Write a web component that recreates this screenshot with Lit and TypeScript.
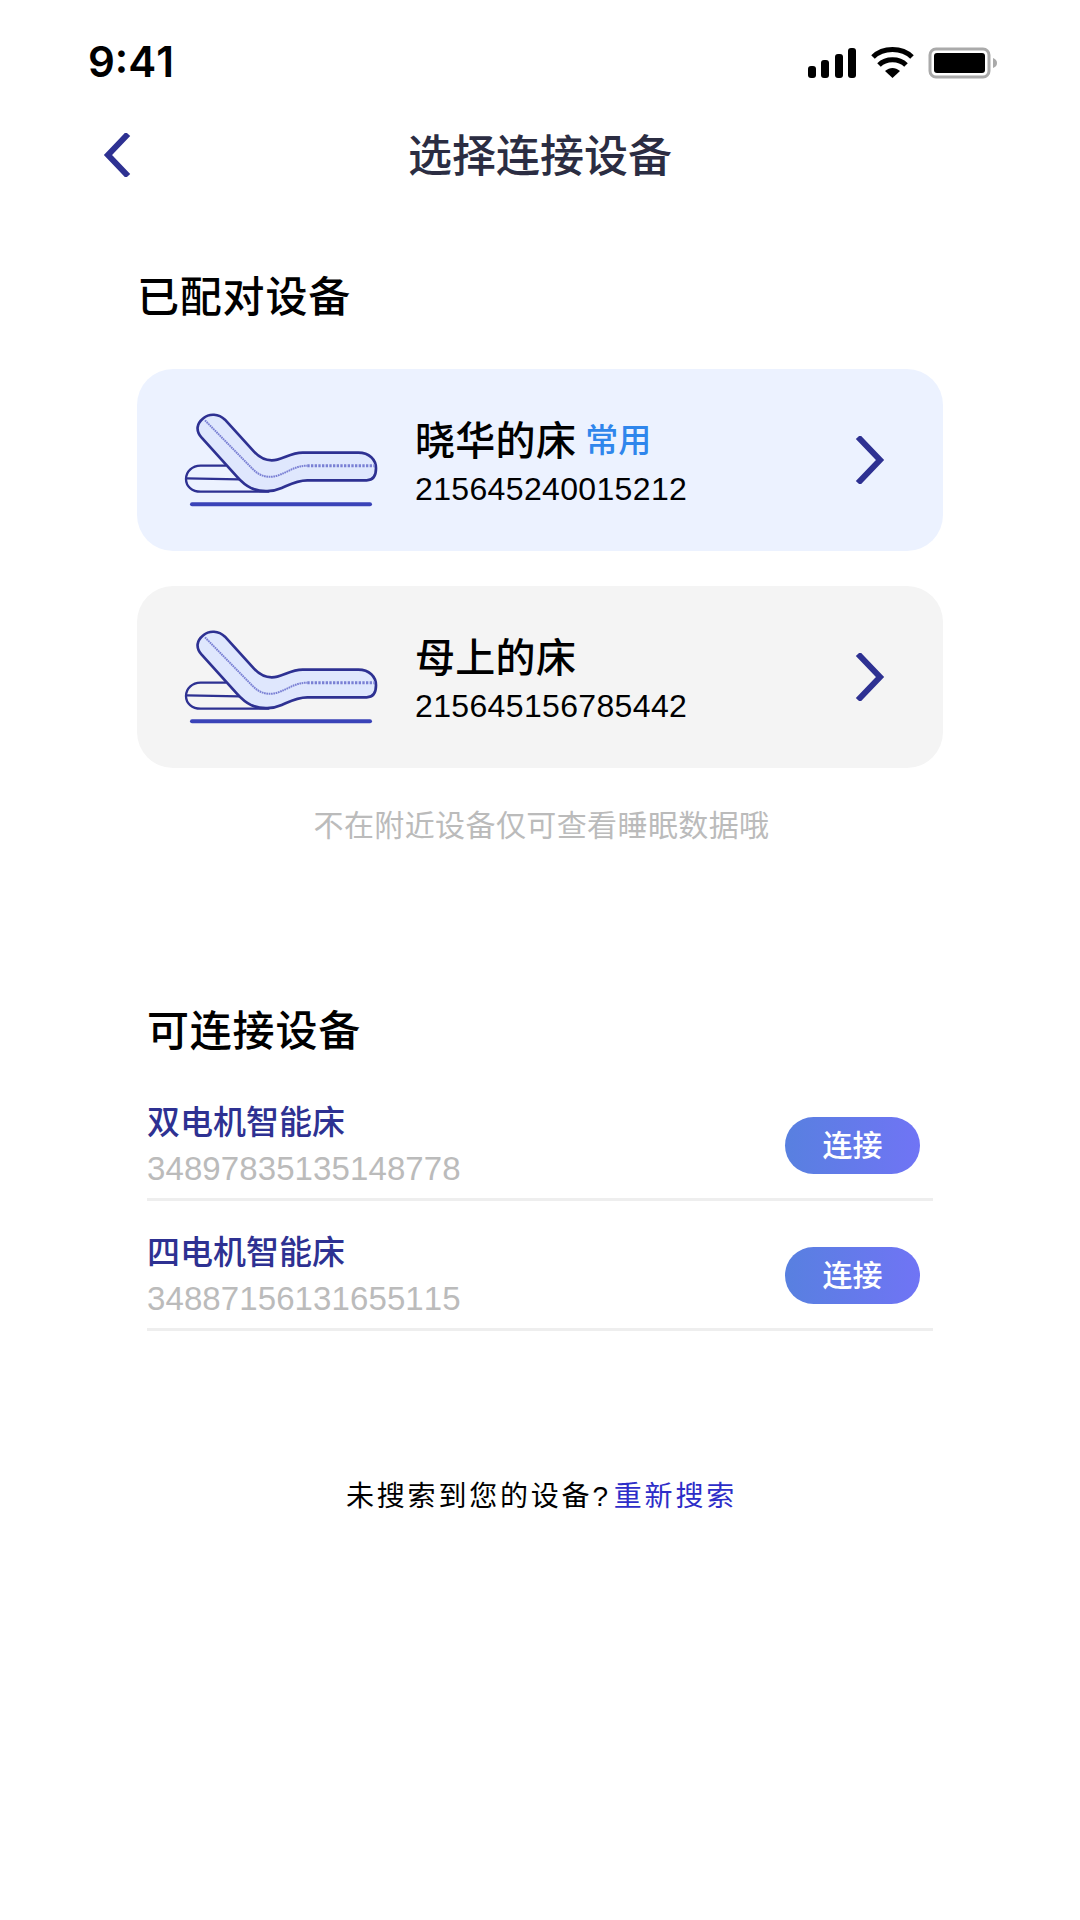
import { html, css, LitElement, svg } from "lit";
import { customElement } from "lit/decorators.js";

const bedIcon = svg`
  <path class="pillow" d="M165 224H92C66 224 48 242 48 264C48 286 66 302 92 302H295" />
  <path class="pillow" d="M50 262L208 265" />
  <path class="mattress" d="M100 82C118 66 146 68 165 86L252 182C272 204 295 212 322 206C345 201 365 185 398 185H565C598 185 618 206 618 232C618 256 608 268 590 268H412C380 268 360 280 335 291C310 302 275 305 245 292C228 284 214 272 200 256L95 140C76 118 80 98 100 82Z" />
  <path class="seam" d="M105 88L250 236C270 256 296 262 322 254C355 243 375 224 412 224" />
  <path class="seam flat" d="M412 224H615" />
  <path class="base" d="M66 340H600" />
`;

const devices = [
  { name: "晓华的床", id: "215645240015212", tag: "常用", active: true },
  { name: "母上的床", id: "215645156785442", tag: "", active: false },
];

const available = [
  { name: "双电机智能床", id: "34897835135148778" },
  { name: "四电机智能床", id: "34887156131655115" },
];

@customElement("app-root")
export class AppRoot extends LitElement {
  static styles = css`
    :host {
      display: block;
      width: 1080px;
      height: 1920px;
      background: #fff;
      color: #000;
      font-family: "Liberation Sans", "Noto Sans CJK SC", sans-serif;
      font-kerning: none;
    }
    .status {
      display: flex;
      justify-content: space-between;
      align-items: flex-start;
      height: 60px;
      padding: 40px 60px 0 88px;
    }
    .time {
      font-family: Inter, "Liberation Sans", sans-serif;
      font-size: 42px;
      font-weight: 600;
      line-height: 44px;
    }
    .status svg {
      display: block;
    }
    .nav {
      display: grid;
      grid-template-columns: 1fr auto 1fr;
      align-items: center;
      height: 114px;
    }
    .back {
      display: block;
      margin: 0 0 5px 102px;
    }
    .nav h1 {
      margin: 0;
      font-size: 44px;
      font-weight: 500;
      line-height: 60px;
      color: #2b2d42;
    }
    .heading {
      margin: 0;
      font-size: 42px;
      font-weight: 500;
      letter-spacing: 0.8px;
      line-height: 60px;
    }
    .paired {
      padding: 54px 137px 0;
    }
    .paired .heading {
      margin: 0 0 41px 0;
    }
    .cards {
      display: flex;
      flex-direction: column;
      gap: 35px;
    }
    .card {
      display: flex;
      align-items: center;
      height: 182px;
      border-radius: 36px;
      background: #f4f4f4;
    }
    .card.active {
      background: #ecf2ff;
    }
    .bed {
      display: block;
      flex: none;
      margin: 0 25px 9px 33px;
    }
    .bed path {
      fill: none;
      stroke-linecap: round;
    }
    .bed .pillow {
      stroke: #2e3192;
      stroke-width: 7;
    }
    .bed .mattress {
      fill: #dfe7fd;
      stroke: #2e3192;
      stroke-width: 8;
    }
    .bed .seam {
      stroke: #7a80d4;
      stroke-width: 6;
      stroke-dasharray: 5 2;
      stroke-linecap: butt;
    }
    .bed .seam.flat {
      stroke-width: 9;
      stroke-dasharray: 7 4;
    }
    .bed .base {
      stroke: #3a43b8;
      stroke-width: 12;
    }
    .info {
      flex: 1;
      margin-top: 7px;
    }
    .name {
      display: flex;
      align-items: center;
      gap: 9px;
      font-size: 40px;
      font-weight: 500;
      letter-spacing: 0.3px;
      line-height: 50px;
    }
    .tag {
      font-size: 33px;
      font-weight: 500;
      letter-spacing: 0;
      color: #2f86ec;
    }
    .serial {
      font-size: 32px;
      letter-spacing: 0.35px;
      line-height: 46px;
    }
    .go {
      display: block;
      flex: none;
      margin-right: 58px;
    }
    .go path,
    .back path {
      fill: none;
      stroke: #2e3192;
      stroke-width: 6;
    }
    .note {
      margin: 38px 0 0;
      padding-left: 3px;
      font-size: 30px;
      letter-spacing: 0.4px;
      line-height: 40px;
      text-align: center;
      color: #bbb;
    }
    .nearby {
      padding: 156px 147px 0;
    }
    .nearby .heading {
      margin: 0 0 9px 0;
    }
    .row {
      display: flex;
      justify-content: space-between;
      align-items: flex-end;
      height: 130px;
      box-sizing: border-box;
      padding-bottom: 6px;
      border-bottom: 3px solid #eee;
    }
    .row-name {
      font-size: 33px;
      font-weight: 500;
      line-height: 45px;
      color: #2e3192;
    }
    .row-id {
      font-size: 33px;
      letter-spacing: 0.1px;
      line-height: 47px;
      color: #bbb;
    }
    .connect {
      width: 135px;
      height: 57px;
      margin: 0 13px 18px 0;
      padding: 0;
      border: 0;
      border-radius: 29px;
      background: linear-gradient(90deg, #5880e0, #7074f5);
      color: #fff;
      font: inherit;
      font-size: 30px;
      font-weight: 500;
      line-height: 57px;
    }
    .footer {
      margin: 146px 0 0;
      padding-left: 3px;
      font-size: 28px;
      letter-spacing: 2.8px;
      line-height: 40px;
      text-align: center;
    }
    .footer span {
      margin-left: 3px;
      color: #2d2dc8;
    }
  `;

  render() {
    return html`
      <div class="status">
        <span class="time">9:41</span>
        <svg width="240" height="60" viewBox="0 0 240 60">
          <rect x="28" y="26" width="8" height="12" rx="3" />
          <rect x="41" y="20" width="8" height="18" rx="3" />
          <rect x="55" y="14" width="8" height="24" rx="3" />
          <rect x="68" y="8" width="8" height="30" rx="3" />
          <path d="M93 17C103 7 122 7 132 17" fill="none" stroke="#000" stroke-width="5" />
          <path d="M99 25C106 18 119 18 126 25" fill="none" stroke="#000" stroke-width="5" />
          <path d="M105 31C110 27 115 27 120 31L112.500 38Z" />
          <rect x="150" y="9" width="59" height="28" rx="6" fill="none" stroke="#aaa" stroke-width="3" />
          <rect x="154" y="13" width="51" height="20" rx="3" />
          <path d="M213 18C216 19 217 21 217 23C217 25 216 27 213 28Z" fill="#aaa" />
        </svg>
      </div>
      <div class="nav">
        <svg class="back" width="30" height="44" viewBox="0 0 30 44">
          <path d="M26 1L6 22L26 43" />
        </svg>
        <h1>选择连接设备</h1>
      </div>
      <section class="paired">
        <h2 class="heading">已配对设备</h2>
        <div class="cards">
          ${devices.map(
            (d) => html`
              <div class="card ${d.active ? "active" : ""}">
                <svg class="bed" width="220" height="130" viewBox="0 0 660 390">${bedIcon}</svg>
                <div class="info">
                  <div class="name">
                    ${d.name}${d.tag ? html`<span class="tag">${d.tag}</span>` : ""}
                  </div>
                  <div class="serial">${d.id}</div>
                </div>
                <svg class="go" width="30" height="48" viewBox="0 0 30 48">
                  <path d="M3 1L25 24L3 47" />
                </svg>
              </div>
            `
          )}
        </div>
      </section>
      <p class="note">不在附近设备仅可查看睡眠数据哦</p>
      <section class="nearby">
        <h2 class="heading">可连接设备</h2>
        ${available.map(
          (d) => html`
            <div class="row">
              <div>
                <div class="row-name">${d.name}</div>
                <div class="row-id">${d.id}</div>
              </div>
              <button class="connect">连接</button>
            </div>
          `
        )}
      </section>
      <p class="footer">未搜索到您的设备?<span>重新搜索</span></p>
    `;
  }
}
